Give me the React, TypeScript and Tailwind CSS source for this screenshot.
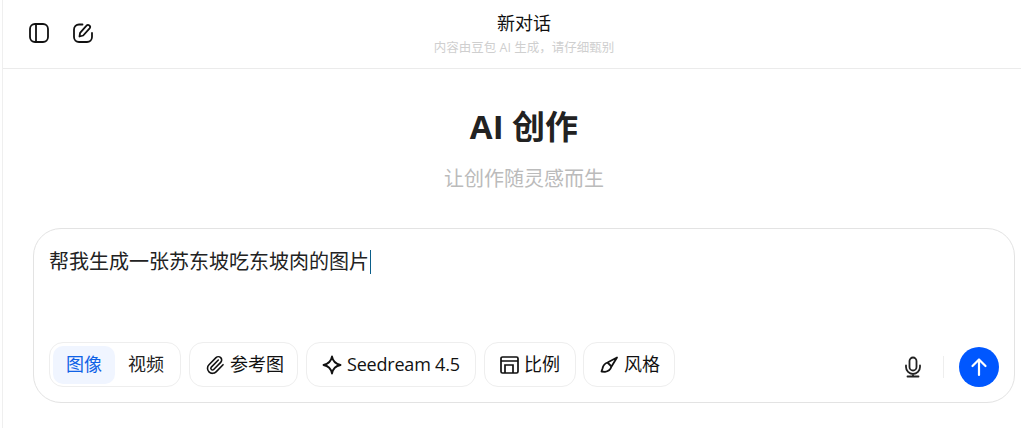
const font = { fontFamily: '"Open Sans", "Noto Sans CJK SC", sans-serif' };

function SidebarIcon() {
  return (
    <svg width="22" height="22" viewBox="0 0 22 22" fill="none" stroke="#111" strokeWidth="1.8">
      <rect x="2" y="2" width="18" height="18" rx="5" />
      <path d="M8 2v18" />
    </svg>
  );
}

function EditIcon() {
  return (
    <svg width="22" height="22" viewBox="0 0 22 22" fill="none" stroke="#111" strokeWidth="1.8" strokeLinecap="round" strokeLinejoin="round">
      <path d="M10.500 2.500H7a5 5 0 0 0-5 5v7.500a5 5 0 0 0 5 5h8a5 5 0 0 0 5-5v-4" />
      <path d="M7.500 14.500l.6-3.600 6.400-7.200a2 2 0 0 1 3.100 2.600l-6.400 7.200z" />
    </svg>
  );
}

function ClipIcon() {
  return (
    <svg width="20" height="20" viewBox="0 0 24 24" fill="none" stroke="#111" strokeWidth="1.900" strokeLinecap="round" strokeLinejoin="round">
      <path d="m16 6-8.414 8.586a2 2 0 0 0 2.829 2.829l8.414-8.586a4 4 0 1 0-5.657-5.657l-8.379 8.551a6 6 0 1 0 8.485 8.485l8.379-8.551" />
    </svg>
  );
}

function SparkIcon() {
  return (
    <svg width="20" height="20" viewBox="0 0 20 20" fill="none" stroke="#111" strokeWidth="1.800" strokeLinejoin="round">
      <path d="M10 1.500c.9 4.900 3.600 7.600 8.500 8.500-4.900.9-7.600 3.600-8.500 8.500-.9-4.900-3.600-7.600-8.500-8.500 4.900-.9 7.600-3.600 8.500-8.500z" />
    </svg>
  );
}

function RatioIcon() {
  return (
    <svg width="20" height="20" viewBox="0 0 20 20" fill="none" stroke="#111" strokeWidth="1.700">
      <rect x="1" y="2" width="17" height="16" rx="1.500" />
      <path d="M1 6h17M5 18v-8h8v8" />
    </svg>
  );
}

function BrushIcon() {
  return (
    <svg width="20" height="20" viewBox="0 0 20 20" fill="none" stroke="#111" strokeWidth="1.800" strokeLinejoin="round">
      <path d="M18 2.500L8.500 7.500C5.500 8.500 4 11 3.500 13.500L2.500 16.500 6 16.800C9 16.500 11.500 14.500 12.500 11.500z" />
      <path d="M8.500 7.500l4 4" />
    </svg>
  );
}

function MicIcon() {
  return (
    <svg width="22" height="22" viewBox="0 0 22 22" fill="none" stroke="#222" strokeWidth="1.800" strokeLinecap="round">
      <rect x="7.500" y="1.500" width="7" height="13" rx="3.500" />
      <path d="M4 9.500v1.500a7 7 0 0 0 14 0V9.500M11 18v2.500M5.500 20.500h11" />
    </svg>
  );
}

function ArrowIcon() {
  return (
    <svg width="20" height="20" viewBox="0 0 20 20" fill="none" stroke="#fff" strokeWidth="2.200" strokeLinecap="round" strokeLinejoin="round">
      <path d="M10 18V2.500M3.500 9L10 2.500 16.500 9" />
    </svg>
  );
}

const chip = 'flex h-[45px] items-center rounded-[14px] border border-[#eeeeee] bg-white text-[18px] text-[#111]';

export default function App() {
  return (
    <div className="h-[428px] w-[1021px] overflow-hidden bg-white pl-[2px]" style={font}>
      <div className="h-full w-[1043px] border-l border-[#efefef]">
        {/* Header */}
        <header className="grid h-[69px] grid-cols-[1fr_auto_1fr] items-center border-b border-[#ebebeb]">
          <div className="flex items-center gap-[22px] pl-[25px] pb-[2px]">
            <SidebarIcon />
            <EditIcon />
          </div>
          <div className="flex flex-col items-center pb-[1px]">
            <div className="text-[18px] leading-[26px] text-[#111]">新对话</div>
            <div className="mt-[3px] text-[12.500px] leading-[18px] text-[#cfcfcf]">内容由豆包 AI 生成，请仔细甄别</div>
          </div>
          <div />
        </header>

        {/* Title */}
        <div className="flex flex-col items-center pt-[34px]">
          <h1 className="text-[33px] leading-[48px] font-bold text-[#222]">AI 创作</h1>
          <p className="mt-[13px] text-[20px] leading-[30px] text-[#bbbbbb]">让创作随灵感而生</p>
        </div>

        {/* Composer */}
        <div className="mt-[34px] ml-[30px] flex h-[175px] w-[982px] flex-col rounded-[28px] border border-[#e3e3e3] bg-white px-[15px] pt-[16px] pb-[15px]">
          <div className="flex-1 text-[20px] leading-[30px] text-[#222]">
            帮我生成一张苏东坡吃东坡肉的图片
            <span className="ml-[1px] inline-block h-[24px] w-px translate-y-[5px] bg-[#0b5f8a]" />
          </div>
          <div className="flex items-end">
            <div className={`${chip} px-[3px]`}>
              <span className="flex h-[38px] w-[62px] items-center justify-center rounded-[10px] bg-[#f0f5ff] text-[#0f62e6]">图像</span>
              <span className="flex h-[38px] w-[62px] items-center justify-center text-[#222]">视频</span>
            </div>
            <div className={`${chip} ml-[8px] gap-[5px] pr-[13px] pl-[15px]`}>
              <ClipIcon />
              参考图
            </div>
            <div className={`${chip} ml-[8px] w-[170px] gap-[5px] pl-[15px] tracking-[-0.2px]`}>
              <SparkIcon />
              Seedream 4.5
            </div>
            <div className={`${chip} ml-[8px] gap-[4px] pr-[15px] pl-[15px]`}>
              <RatioIcon />
              比例
            </div>
            <div className={`${chip} ml-[7px] gap-[5px] pr-[14px] pl-[15px]`}>
              <BrushIcon />
              风格
            </div>
            <div className="ml-auto flex items-center">
              <MicIcon />
              <div className="mr-[15px] ml-[19px] h-[22px] w-px bg-[#eeeeee]" />
              <button className="flex h-[40px] w-[40px] items-center justify-center rounded-full bg-[#0057ff]">
                <ArrowIcon />
              </button>
            </div>
          </div>
        </div>
      </div>
    </div>
  );
}
